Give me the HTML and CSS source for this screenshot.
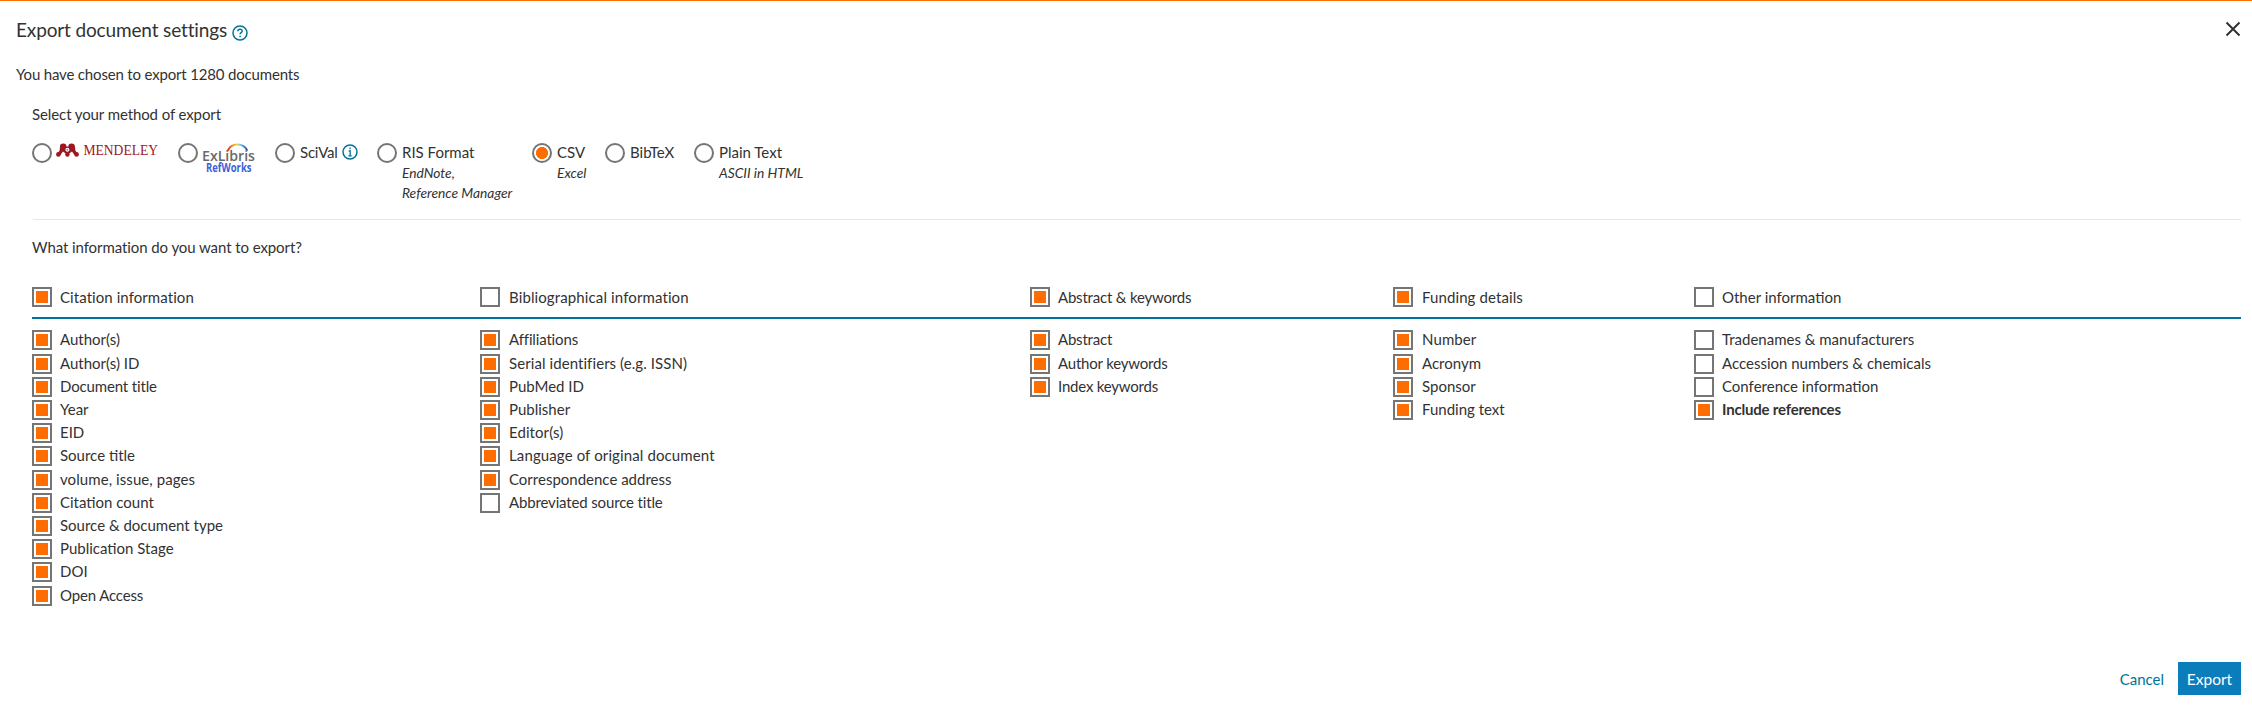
FILE: index.html
```html
<!DOCTYPE html>
<html lang="en">
<head>
<meta charset="utf-8">
<title>Export document settings</title>
<link rel="stylesheet" href="styles.css">
</head>
<body>
<main class="dialog">
  <header class="dialog-header">
    <h1 class="title">Export document settings</h1>
    <svg class="help" viewBox="0 0 16 16"><circle cx="8" cy="8" r="7" fill="none" stroke="#007398" stroke-width="1.5"/><path d="M5.8 6.3C5.9 3.6 10.3 3.7 10.2 6.2C10.1 7.7 8.1 7.6 8.1 9.3M8.1 10.7V12.2" fill="none" stroke="#007398" stroke-width="1.5"/></svg>
    <svg class="close" viewBox="0 0 16 16"><path d="M1.5 1.5L14.5 14.5M14.5 1.5L1.5 14.5" stroke="#323232" stroke-width="2"/></svg>
  </header>
  <p class="chosen">You have chosen to export 1280 documents</p>
  <section class="methods">
    <p class="methods-label">Select your method of export</p>
    <div class="method-list">
      <label class="method m-mendeley"><input class="radio" type="radio" name="m">
        <svg class="mendeley" viewBox="0 0 104 20"><g fill="#9d1620"><circle cx="7.2" cy="3.8" r="3.3"/><circle cx="15.6" cy="3.8" r="3.3"/><circle cx="2.4" cy="11.4" r="2.3"/><circle cx="20.6" cy="11.4" r="2.3"/><circle cx="11.4" cy="11.6" r="2.2"/><path d="M4 4H8L11.5 3.4L15 4H19L19.4 7.6L21 10L18.4 12L16 8.6L12.6 11H10.2L7 8.6L4.4 12L2 10L3.6 7.6Z"/></g><circle cx="11.4" cy="6.7" r="2" fill="#fff"/><circle cx="11.4" cy="6.7" r="1" fill="#c9838a"/><text class="mendeley-name" x="27.5" y="12" textLength="74.5" lengthAdjust="spacingAndGlyphs">MENDELEY</text></svg>
      </label>
      <label class="method m-refworks"><input class="radio" type="radio" name="m">
        <svg class="refworks" viewBox="0 0 54 34"><defs><linearGradient id="arc"><stop offset="0" stop-color="#e5231b"/><stop offset=".25" stop-color="#f58a1f"/><stop offset=".45" stop-color="#f5d33c"/><stop offset=".65" stop-color="#6fc9e8"/><stop offset="1" stop-color="#1c50b4"/></linearGradient></defs><path d="M25.8 7.6C29.5-.5 41.5-.5 45.3 7.6" fill="none" stroke="url(#arc)" stroke-width="2"/><text class="exlibris-name" x="0" y="18" textLength="53" lengthAdjust="spacingAndGlyphs">ExLibris</text><text class="refworks-name" x="4" y="28.5" textLength="45.5" lengthAdjust="spacingAndGlyphs">RefWorks</text></svg>
      </label>
      <label class="method m-scival"><input class="radio" type="radio" name="m"><span class="method-text">SciVal</span>
        <svg class="info" viewBox="0 0 16 16"><circle cx="8" cy="8" r="7" fill="none" stroke="#007398" stroke-width="1.5"/><path d="M8 3.6V5.2M6.7 7H8.2V11.8M6.4 11.8H9.7" fill="none" stroke="#007398" stroke-width="1.3"/></svg>
      </label>
      <label class="method m-ris"><input class="radio" type="radio" name="m"><span class="method-text">RIS Format<em>EndNote,<br>Reference Manager</em></span></label>
      <label class="method m-csv"><input class="radio" type="radio" name="m" checked><span class="method-text">CSV<em>Excel</em></span></label>
      <label class="method m-bibtex"><input class="radio" type="radio" name="m"><span class="method-text">BibTeX</span></label>
      <label class="method m-plain"><input class="radio" type="radio" name="m"><span class="method-text">Plain Text<em>ASCII in HTML</em></span></label>
    </div>
  </section>
  <section class="fields">
    <p class="fields-label">What information do you want to export?</p>
    <div class="grid grid-head">
      <label class="field citation"><input class="check" type="checkbox" checked>Citation information</label>
      <label class="field biblio"><input class="check" type="checkbox">Bibliographical information</label>
      <label class="field abstract"><input class="check" type="checkbox" checked>Abstract &amp; keywords</label>
      <label class="field funding"><input class="check" type="checkbox" checked>Funding details</label>
      <label class="field"><input class="check" type="checkbox">Other information</label>
    </div>
    <div class="grid grid-body">
      <div class="column">
        <label class="field"><input class="check" type="checkbox" checked>Author(s)</label>
        <label class="field"><input class="check" type="checkbox" checked>Author(s) ID</label>
        <label class="field tight"><input class="check" type="checkbox" checked>Document title</label>
        <label class="field"><input class="check" type="checkbox" checked>Year</label>
        <label class="field"><input class="check" type="checkbox" checked>EID</label>
        <label class="field"><input class="check" type="checkbox" checked>Source title</label>
        <label class="field loose"><input class="check" type="checkbox" checked>volume, issue, pages</label>
        <label class="field"><input class="check" type="checkbox" checked>Citation count</label>
        <label class="field"><input class="check" type="checkbox" checked>Source &amp; document type</label>
        <label class="field"><input class="check" type="checkbox" checked>Publication Stage</label>
        <label class="field"><input class="check" type="checkbox" checked>DOI</label>
        <label class="field tight"><input class="check" type="checkbox" checked>Open Access</label>
      </div>
      <div class="column">
        <label class="field biblio tight"><input class="check" type="checkbox" checked>Affiliations</label>
        <label class="field biblio loose"><input class="check" type="checkbox" checked>Serial identifiers (e.g. ISSN)</label>
        <label class="field biblio even"><input class="check" type="checkbox" checked>PubMed ID</label>
        <label class="field biblio even"><input class="check" type="checkbox" checked>Publisher</label>
        <label class="field biblio loose"><input class="check" type="checkbox" checked>Editor(s)</label>
        <label class="field biblio"><input class="check" type="checkbox" checked>Language of original document</label>
        <label class="field biblio even"><input class="check" type="checkbox" checked>Correspondence address</label>
        <label class="field biblio tight"><input class="check" type="checkbox">Abbreviated source title</label>
      </div>
      <div class="column">
        <label class="field abstract"><input class="check" type="checkbox" checked>Abstract</label>
        <label class="field abstract"><input class="check" type="checkbox" checked>Author keywords</label>
        <label class="field abstract"><input class="check" type="checkbox" checked>Index keywords</label>
      </div>
      <div class="column">
        <label class="field funding"><input class="check" type="checkbox" checked>Number</label>
        <label class="field funding even"><input class="check" type="checkbox" checked>Acronym</label>
        <label class="field funding even"><input class="check" type="checkbox" checked>Sponsor</label>
        <label class="field funding even"><input class="check" type="checkbox" checked>Funding text</label>
      </div>
      <div class="column">
        <label class="field"><input class="check" type="checkbox">Tradenames &amp; manufacturers</label>
        <label class="field"><input class="check" type="checkbox">Accession numbers &amp; chemicals</label>
        <label class="field"><input class="check" type="checkbox">Conference information</label>
        <label class="field strong"><input class="check" type="checkbox" checked>Include references</label>
      </div>
    </div>
  </section>
  <footer class="actions"><a class="cancel">Cancel</a><button class="export">Export</button></footer>
</main>
</body>
</html>
```
FILE: styles.css
```css
* { box-sizing: border-box; }
body { margin: 0; background: #fff; color: #323232; font: 15px/20px Lato, "Open Sans", sans-serif; }
h1, p { margin: 0; font-weight: 400; }
.dialog { display: flex; flex-direction: column; height: 714px; border-top: 1px solid #ff6c00; padding: 16px 11px 19px 16px; }
.dialog-header { display: flex; align-items: flex-start; height: 48px; }
.title { font-size: 19px; line-height: 26px; letter-spacing: -0.14px; white-space: nowrap; }
.help { width: 16px; height: 16px; margin: 8px 0 0 5px; }
.close { width: 16px; height: 16px; margin: 4px 0 0 auto; }
.chosen { height: 40px; line-height: 18px; letter-spacing: -0.17px; }
.methods { margin-left: 16px; height: 115px; border-bottom: 1px solid #e6e6e6; border-bottom-left-radius: 3px; }
.methods-label { height: 38px; line-height: 18px; letter-spacing: -0.1px; }
.method-list { display: flex; }
.method { display: flex; align-items: flex-start; flex: none; }
.m-mendeley { width: 146px; }
.m-refworks { width: 97px; }
.m-scival { width: 102px; letter-spacing: -0.2px; }
.m-ris { width: 155px; }
.m-csv { width: 73px; }
.m-bibtex { width: 89px; }
.radio, .check { appearance: none; flex: none; width: 20px; height: 20px; margin: 0; padding: 2px; border: 2px solid #757576; background: #fff; }
.radio { border-radius: 50%; }
/* A wider gap keeps the round dot clear of its ring. */
.radio:checked { background: radial-gradient(circle, #ff6c00 5.7px, #fff 6.3px); }
.check:checked { background: #ff6c00 content-box; }
.method-text { margin-left: 5px; line-height: 18px; white-space: nowrap; }
.method-text em { display: block; margin-top: 2px; font-size: 13.8px; line-height: 20px; }
.mendeley { width: 104px; height: 20px; margin-left: 4px; overflow: visible; }
.mendeley-name { font: 14.5px "Liberation Serif", serif; fill: #9d1620; }
.refworks { width: 54px; height: 34px; margin-left: 4px; overflow: visible; }
.exlibris-name { font: 600 14px "Open Sans", sans-serif; fill: #68696b; }
.refworks-name { font: 700 11.5px "Open Sans", sans-serif; fill: #3a62da; }
.info { width: 16px; height: 16px; margin: 1px 0 0 4px; }
.fields { margin-left: 16px; }
.fields-label { margin-top: 18px; height: 49px; line-height: 18px; letter-spacing: -0.08px; }
.grid { display: grid; grid-template-columns: 448px 550px 363px 301px 1fr; }
.grid-head { height: 32px; border-bottom: 2px solid #007398; align-items: start; }
.grid-body { padding-top: 11.45px; }
.field { display: flex; gap: 8px; line-height: 20px; white-space: nowrap; }
.column .field { height: 23.2px; line-height: 18px; }
.citation { letter-spacing: 0.07px; }
.biblio { gap: 9px; letter-spacing: 0.12px; }
.abstract { letter-spacing: -0.2px; }
.funding { gap: 9px; letter-spacing: 0.1px; }
.even { letter-spacing: 0; }
.loose { letter-spacing: 0.08px; }
.tight { letter-spacing: -0.15px; }
.strong { font-weight: 700; letter-spacing: -0.2px; }
.actions { display: flex; justify-content: flex-end; align-items: flex-start; margin-top: auto; gap: 14px; }
.cancel { color: #007398; padding-top: 7px; }
.export { width: 63px; height: 33px; border: 0; padding: 0; background: #0c7dbb; color: #fff; font: 15.5px/32px Lato, sans-serif; }
```
